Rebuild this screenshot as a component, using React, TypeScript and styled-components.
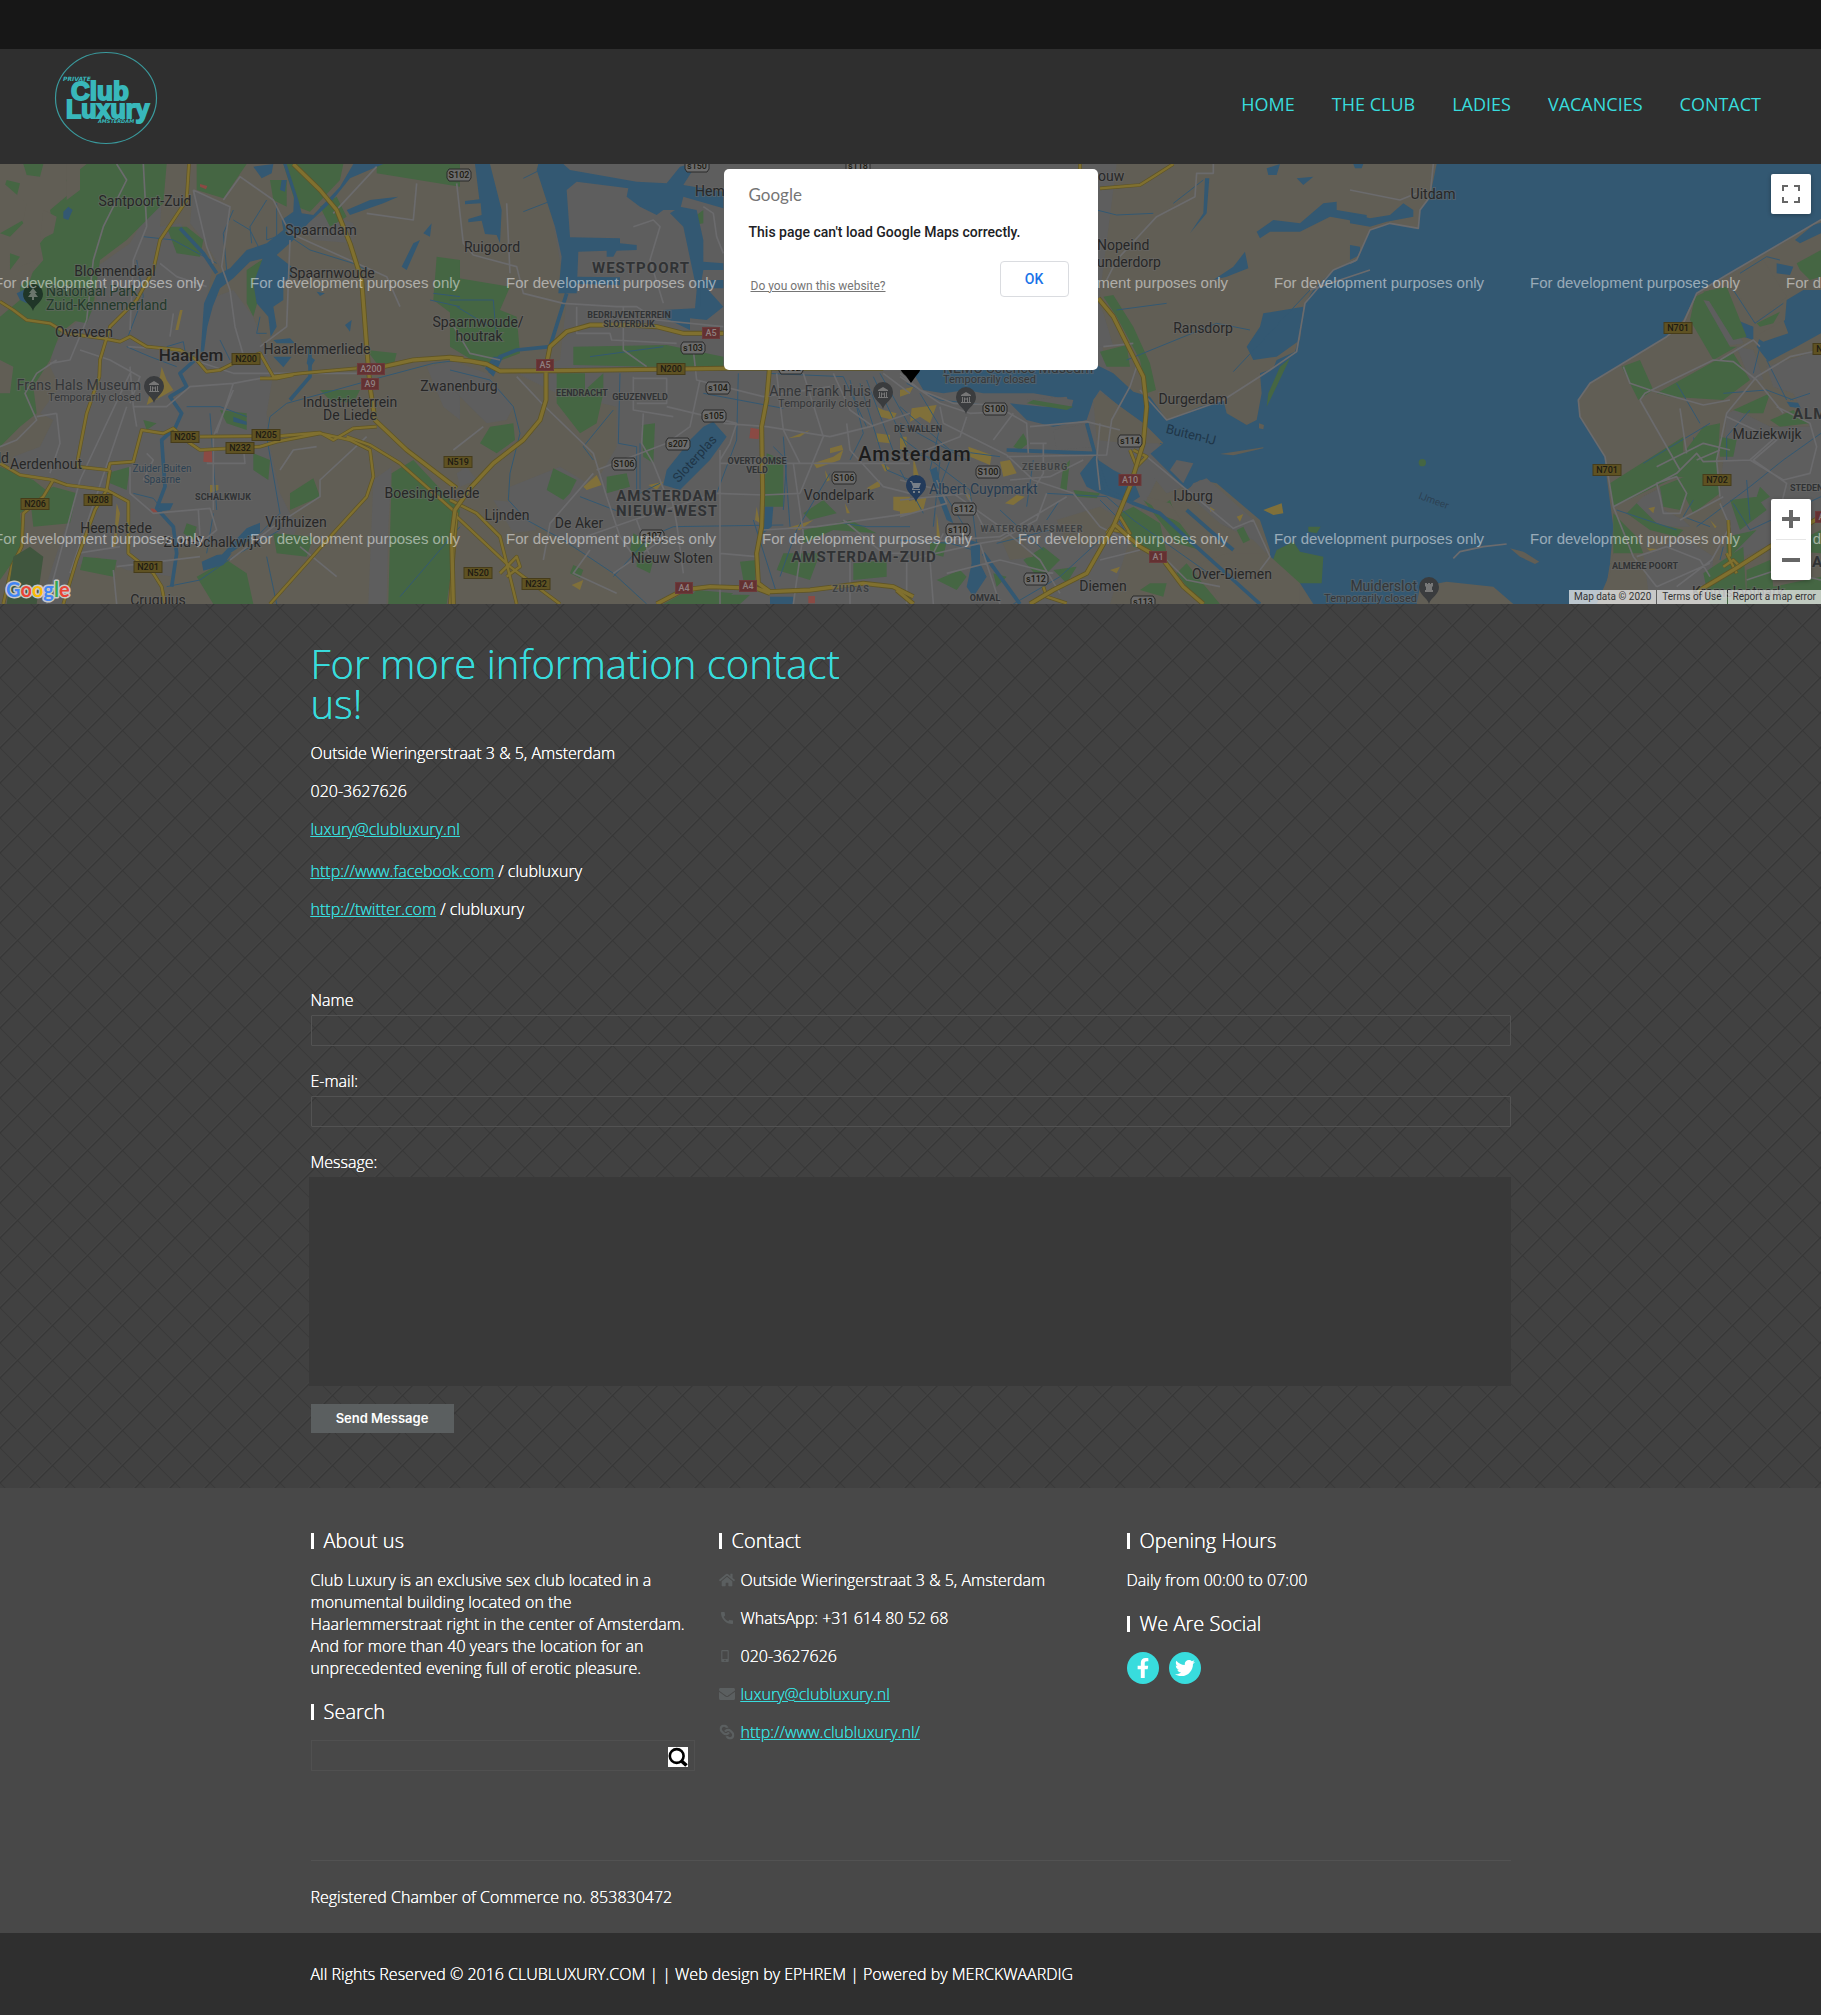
import React from "react";
import styled, { createGlobalStyle } from "styled-components";
import { FaEnvelope, FaFacebookF, FaHome, FaLink, FaMobileAlt, FaTwitter } from "react-icons/fa";
import { MdCall } from "react-icons/md";

const accent = "#38dcdd";

const diamondTile = `url("data:image/svg+xml,${encodeURIComponent(
  `<svg xmlns='http://www.w3.org/2000/svg' width='35' height='35' fill='none'><path d='M-2 -2L37 37' stroke='#393939' stroke-width='1.2'/><path d='M-2 35.500L35.500 -2' stroke='#464646'/><path d='M-2 37L37 -2M-2 2L2 -2M33 37L37 33' stroke='#373737' stroke-width='1.3'/></svg>`
)}")`;

const GlobalStyle = createGlobalStyle`
  * { box-sizing: border-box; }
  body {
    margin: 0;
    background: #414141;
    color: #fff;
    font: 300 16px/22px "Open Sans", "Noto Sans", sans-serif;
    text-shadow: 0 0 currentColor;
  }
  p, h1, h2, ul { margin: 0; padding: 0; font-weight: 300; }
  ul { list-style: none; }
`;

const TopBar = styled.div`
  height: 49px;
  background: #171717;
`;

const Header = styled.header`
  display: flex;
  justify-content: space-between;
  align-items: flex-start;
  height: 115px;
  padding: 0 60px 0 54px;
  background: #2f2f2f;
  text-shadow: none;
`;

const HomeLink = styled.a`
  display: block;
  height: 98px;
`;

const Nav = styled.nav`
  display: flex;
  gap: 37px;
  padding-top: 43px;
`;

const NavLink = styled.a`
  color: ${accent};
  font-size: 18px;
  font-weight: 400;
  line-height: 24px;
  text-decoration: none;
`;

const MapPanel = styled.section`
  position: relative;
  height: 440px;
  overflow: hidden;
  background: #615e55;
  font-family: Roboto, "Liberation Sans", sans-serif;
  text-shadow: none;
`;

const MapDrawing = styled.svg`
  display: block;
  width: 100%;
  height: 440px;
`;

const Dialog = styled.div`
  position: absolute;
  top: 5px;
  left: 50%;
  width: 374px;
  height: 201px;
  margin-left: -187px;
  padding: 15px 25px;
  border-radius: 5px;
  background: #fff;
  color: #202124;
`;

const DialogBrand = styled.div`
  color: #757575;
  font: 400 17px/22px Lato, sans-serif;
`;

const DialogTitle = styled.p`
  && { font-weight: 500; }
  margin-top: 16px;
  font-size: 14px;
  line-height: 20px;
`;

const DialogRow = styled.div`
  display: flex;
  justify-content: space-between;
  align-items: center;
  padding: 19px 4px 0 2px;
`;

const OwnerLink = styled.a`
  margin-top: 13px;
  color: #757575;
  font-size: 12px;
  font-weight: 400;
  line-height: 16px;
`;

const OkButton = styled.button`
  width: 69px;
  height: 36px;
  border: 1px solid #dadce0;
  border-radius: 4px;
  background: #fff;
  color: #1a73e8;
  font: 500 14px Roboto, sans-serif;
`;

const MapControls = styled.div`
  position: absolute;
  top: 10px;
  right: 10px;
  bottom: 24px;
  display: flex;
  flex-direction: column;
  justify-content: space-between;
`;

const ControlGroup = styled.div`
  display: flex;
  flex-direction: column;
  align-items: center;
  border-radius: 2px;
  background: #fff;
  box-shadow: 0 1px 4px rgba(0, 0, 0, 0.3);
`;

const ControlButton = styled.button`
  display: grid;
  place-items: center;
  width: 40px;
  height: 40px;
  padding: 0;
  border: 0;
  background: none;
`;

const ControlDivider = styled.div`
  width: 30px;
  height: 1px;
  background: #e6e6e6;
`;

const Attribution = styled.div`
  position: absolute;
  right: 0;
  bottom: 0;
  display: flex;
  gap: 1px;
`;

const Credit = styled.a`
  padding: 0 5px;
  background: rgba(245, 245, 245, 0.7);
  color: #333;
  font-size: 10px;
  font-weight: 400;
  line-height: 14px;
  text-decoration: none;
`;

const Main = styled.main`
  padding: 40px 20px 55px;
  background: #414141 ${diamondTile} 0 4px;
`;

const Container = styled.div`
  max-width: 1200px;
  margin: 0 auto;
`;

const Title = styled.h1`
  max-width: 588px;
  && { margin-bottom: 18px; }
  color: ${accent};
  font-size: 40px;
  line-height: 40px;
`;

const Details = styled.div`
  display: flex;
  flex-direction: column;
  gap: 16px;
`;

const Profiles = styled(Details)`
  margin-top: 4px;
`;

const TextLink = styled.a`
  color: ${accent};
`;

const Form = styled.form`
  display: flex;
  flex-direction: column;
  gap: 24px;
  margin-top: 69px;
`;

const Field = styled.div`
  display: flex;
  flex-direction: column;
  gap: 4px;
`;

const TextInput = styled.input`
  width: 100%;
  height: 31px;
  padding: 0 8px;
  border: 1px solid #525252;
  border-radius: 1px;
  background: transparent;
  color: #fff;
  font: inherit;
`;

const MessageBox = styled.textarea`
  display: block;
  height: 209px;
  margin: 0 0 0 -2px;
  padding: 8px;
  border: 0;
  background: #393939;
  color: #fff;
  font: inherit;
  resize: none;
`;

const SendButton = styled.button`
  width: 143px;
  height: 29px;
  margin-top: -6px;
  padding: 0 0 2px;
  border: 0;
  background: #5b5f60;
  color: #fff;
  font: 600 13px Inter, "Liberation Sans", sans-serif;
`;

const Footer = styled.footer`
  padding: 40px 20px 25px;
  background: #484848;
`;

const Columns = styled.div`
  display: grid;
  grid-template-columns: repeat(3, 1fr);
  gap: 24px;
  padding-bottom: 89px;
  border-bottom: 1px solid #525252;
`;

const Column = styled.div`
  display: flex;
  flex-direction: column;
  gap: 20px;
`;

const Widget = styled.section`
  display: flex;
  flex-direction: column;
  gap: 15px;
`;

const WidgetTitle = styled.h2`
  display: flex;
  align-items: center;
  gap: 10px;
  font-size: 20px;
  line-height: 26px;

  &::before {
    content: "";
    width: 3px;
    height: 16px;
    background: #fff;
  }
`;

const SearchForm = styled.form`
  display: flex;
  align-items: center;
  height: 31px;
  padding-right: 6px;
  border: 1px solid #505050;
`;

const SearchInput = styled.input`
  flex: 1;
  height: 29px;
  padding: 0 8px;
  border: 0;
  background: transparent;
  color: #fff;
  font: inherit;
`;

const SearchButton = styled.button`
  display: block;
  width: 20px;
  height: 20px;
  margin-top: 2px;
  padding: 0;
  border: 0;
  background: #fff;

  svg { display: block; }
`;

const ContactItem = styled.li`
  display: flex;
  align-items: center;
  gap: 6px;
`;

const ItemIcon = styled.span<{ $turned?: boolean }>`
  display: flex;
  width: 16px;
  color: #5b5f60;
  transform: ${(p) => (p.$turned ? "rotate(90deg)" : "none")};
`;

const ContactList = styled.ul`
  display: flex;
  flex-direction: column;
  gap: 16px;
`;

const Socials = styled.div`
  display: flex;
  gap: 10px;
`;

const SocialLink = styled.a`
  display: grid;
  place-items: center;
  width: 32px;
  height: 32px;
  border-radius: 50%;
  background: ${accent};
  color: #fff;
`;

const Registration = styled.p`
  && { margin-top: 25px; }
`;

const Legal = styled.div`
  padding: 30px 20px;
  background: #2f2f2f;
`;

function Logo() {
  return (
    <svg width="104" height="98" viewBox="54 49 104 98" role="img" aria-label="Private Club Luxury Amsterdam">
      <ellipse cx="106" cy="98" rx="50.5" ry="45.5" fill="none" stroke="#3a9a9d" strokeWidth="1.2" />
      <g fill="#38b8bb" stroke="#38b8bb" fontFamily="Liberation Sans, Arial, sans-serif" fontWeight="700">
        <text x="71" y="100" fontSize="26" strokeWidth="1.8">Club</text>
        <text x="66" y="118" fontSize="25" strokeWidth="1.8">Luxury</text>
        <g fontStyle="italic" stroke="none" fontFamily="DejaVu Sans, sans-serif">
          <text x="63" y="81" fontSize="6">PRIVATE</text>
          <text x="98" y="123" fontSize="5">AMSTERDAM</text>
        </g>
      </g>
    </svg>
  );
}

/* Map geometry is kept in a 3x grid, divided into sheets by their left edge. */
type Sheet = {
  left: number;
  urban?: string[];
  land?: string[];
  green?: string[];
  water?: string[];
  canals?: string[];
  rivers?: string[];
  streets?: string[];
  mains?: string[];
  highways?: string[];
  blocks?: string[];
  reds?: string[];
};

const sheets: Sheet[] = [
  {
    left: 0,
    green: [
      "0 470 60 420 60 380 130 300 120 250 160 200 150 150 210 100 200 60 260 12 500 12 490 130 440 180 380 240 300 300 280 440 180 520 150 600 100 680 110 760 60 800 0 860",
      "70 12 130 12 120 50 80 45", "20 60 60 70 50 110 10 90", "0 180 50 150 70 190 30 230 0 220", "30 280 60 290 30 330",
      "0 920 100 960 150 1000 60 1060 70 1160 0 1260", "90 1010 160 980 230 1000 210 1090 100 1100",
      "500 200 560 200 610 240 600 290 530 280", "590 12 740 12 670 115 590 90", "810 60 860 60 860 140 820 120", "850 12 1030 12 1020 60 930 155 890 140",
      "1130 12 1380 12 1380 80 1130 40", "740 330 800 290 780 400 760 470 740 430", "960 140 1010 110 1040 170 990 200",
      "1100 570 1190 580 1180 620 1130 610", "660 750 740 760 740 810 680 790", "760 880 810 900 805 960 760 930", "430 780 470 790 440 810",
      "870 1000 940 955 960 1010 870 1050", "1175 940 1240 900 1380 1050 1340 1332 1165 1332", "590 1250 680 1200 740 1240 760 1332 640 1332",
      "820 1120 940 1130 920 1190 830 1180", "560 1090 590 1100 580 1140 550 1120", "1310 290 1380 300 1380 480 1300 420", "320 940 390 920 380 990 330 970",
      "960 690 1080 690 1060 730 990 720", "250 1190 350 1200 340 1250 240 1230", "230 320 290 310 280 370 230 380", "210 440 280 440 260 490 210 480",
    ],
    land: [
      "0 60 80 130 70 180 0 220", "200 12 240 12 240 90 200 120", "130 150 170 170 160 220 120 240", "60 320 110 300 90 360 40 370", "0 600 40 620 30 700 0 700",
    ],
    urban: [
      "440 60 490 60 480 200 540 190 640 310 620 420 700 390 760 470 790 560 820 640 800 760 810 860 840 1000 880 1080 840 1130 760 1140 540 1160 520 1250 380 1230 290 1190 230 1220 200 1332 120 1332 230 1000 150 960 60 950 40 890 120 860 160 780 120 760 180 680 150 620 160 560 200 510 290 440 290 320 390 250 430 180",
      "580 90 690 140 660 320 610 240 570 190", "900 190 980 160 1060 190 1060 250 940 240", "1280 620 1380 600 1380 780 1330 740", "1120 960 1175 920 1165 1100 1160 1332 1105 1332", "850 1060 900 1080 880 1130 840 1110",
    ],
    water: [
      "1060 12 1150 12 1050 55 990 130 925 190 880 240 830 285 750 305 700 355 660 385 638 440 622 500 612 575 602 575 612 430 650 345 690 325 740 270 800 250 850 210 845 180 880 155 882 110 850 12 860 12 895 120 905 160 940 165 1020 80",
      "790 290 830 285 875 320 875 350 850 365 850 420 820 440 830 500 812 530 805 470 770 430 760 370 775 330",
      "1040 150 1110 120 1195 110 1150 130 1050 165", "1270 220 1295 190 1290 230", "1240 250 1260 240 1220 330 1205 320",
      "605 1205 650 1185 695 1180 670 1215 610 1232", "740 1105 780 1088 780 1120 690 1180 650 1200", "760 20 820 12 815 40 785 55", "190 155 205 140 218 150 205 180 190 175",
      "50 400 90 380 80 430 60 420", "820 590 875 590 850 622", "950 395 975 400 960 408", "1035 495 1055 480 1050 515", "845 60 860 60 855 95 840 90", "820 540 870 535 885 550 830 550",
      "700 770 740 785 740 795 700 785", "480 1030 520 1030 510 1050 475 1055", "925 585 945 600 930 625 920 610",
    ],
    rivers: ["585 600 540 640 560 680 510 710 545 760 525 805 485 840 495 980 470 1045 520 1100 530 1180 515 1280", "930 560 930 650 870 720", "650 340 610 280 540 205"],
    canals: [
      "1380 600 1300 610 1150 650 970 700 860 730 810 770 800 830 840 1060 780 1120", "500 1280 600 1260 700 1190 840 1110", "380 560 450 590 530 620", "700 150 670 220 680 330", "830 130 830 230 800 240 800 200",
      "700 180 750 210 780 270", "800 120 750 200 755 250", "560 740 660 740 740 770", "630 760 635 830 650 1050", "1380 1100 1200 1310", "410 300 430 410 380 540", "620 1180 640 1060", "780 470 770 520 800 520", "870 230 930 270 1060 310 1100 330",
      "1300 400 1380 410", "1290 420 1380 440", "500 560 550 545 560 600", "660 540 690 600", "400 1000 460 1015 480 1040", "800 1190 830 1332", "430 230 520 240 650 310",
    ],
    streets: [
      "430 12 440 200 400 300 390 510", "350 12 380 60 310 200 280 300 260 480 210 600 150 610", "580 90 690 140 665 320 690 390 705 500 730 585", "580 90 620 260 640 310", "480 310 530 350 620 380", "510 530 520 460",
      "240 570 330 600 420 650 390 730", "400 740 500 740 570 680 700 670 810 650", "700 670 650 820", "390 920 390 1000 460 1060 630 1045 650 1110 600 1150", "595 1050 600 1130 620 1140", "170 760 180 850 150 940",
      "0 860 50 840 110 780 75 700 110 640 170 600", "690 1200 820 1100 960 1010 960 960 1100 830", "670 120 720 50 820 120 870 220 1070 310", "210 1240 380 740", "870 240 860 500 780 560", "580 600 700 640 1070 640",
      "110 770 170 760", "385 560 520 570", "440 880 460 900 430 960", "700 690 640 830 640 1050", "730 860 735 910 620 910", "1070 310 1160 350 1200 440", "1250 70 1240 180 1100 160", "340 1230 350 1332", "230 1180 360 1160",
      "350 1220 600 1190", "390 620 400 740 410 800", "140 1332 240 960 390 640", "840 930 880 870 950 860", "1130 20 1000 160", "900 1160 1010 1250",
    ],
    mains: [
      "567 12 560 120 480 240 460 330 410 420 330 500 300 600 298 650 260 760 235 890 230 920", "0 425 40 450 80 480 150 490 200 520 310 535 360 545 390 530 440 560 540 570 590 600 620 635 660 630 700 610 780 580 820 650 900 640 1070 625",
      "230 920 325 930 330 910 400 905 425 810 490 820 520 805 570 850 600 870 780 860 830 845 960 820 1050 840 1110 870 1120 950 1100 1010 1000 1120 810 1332",
      "600 830 840 828 960 818 1000 840 1060 805 1130 800", "0 910 60 945 160 960 200 975 320 990 385 1025 385 1180 460 1240 485 1280 495 1332", "330 930 320 990 285 1050 230 1200 190 1332",
      "160 960 130 1010 70 1060 65 1160 35 1220 10 1332", "1040 830 1110 855 1200 910 1370 1060 1350 1332", "780 655 830 655 880 645",
    ],
    highways: ["1070 625 1150 620 1240 600 1350 592 1390 597", "880 12 960 90 1010 150 1050 250 1085 360 1100 560 1110 680 1125 780 1220 870 1370 985"],
    blocks: ["540 450 548 450 535 510 526 510", "485 620 480 650 465 680 475 720 450 700 440 735 520 690 500 660", "350 1030 360 1060 345 1165 340 1160", "630 975 655 975 655 990 630 1000"],
    reds: ["600 72 622 78 618 88 600 80", "612 868 638 868 638 908 610 905", "452 1045 478 1050 472 1062 455 1058"],
  },
  {
    left: 1350,
    urban: [
      "280 12 2000 12 1950 400 1960 600 2100 800 2150 900 2050 1100 1980 1332 590 1332 490 1240 340 1140 230 1080 180 1020 180 980 330 920 430 980 500 860 500 740 320 700 200 640 330 600 350 420",
      "0 600 110 640 190 740 170 780 110 790 0 680", "130 1020 220 1030 260 1110 190 1120", "20 940 50 920 80 960 30 980",
    ],
    green: [
      "0 350 180 380 150 450 200 470 210 580 100 620 0 560", "370 560 650 555 820 590 820 620 600 620 370 615", "320 640 405 640 405 690 460 640 460 700 440 790 390 820 320 730",
      "120 800 190 790 195 840 140 880 90 850", "310 925 380 960 360 1000 340 1020 290 990", "575 795 615 790 610 910 580 890", "470 950 530 940 540 980 470 1000", "950 880 1000 900 1000 1040 940 1040",
      "1060 1110 1200 1080 1280 1120 1150 1110 1060 1150", "870 1205 920 1200 915 1260 880 1260", "1000 1180 1110 1180 1080 1260 980 1230", "640 1332 700 1300 900 1305 870 1332", "550 1120 600 1150 570 1200 540 1170",
      "370 1215 400 1230 390 1255 360 1240", "1210 1210 1310 1200 1310 1250 1210 1260", "720 180 760 150 760 190 730 195", "560 1200 610 1200 600 1240 560 1220", "1120 1020 1160 1060 1080 1080 1060 1060", "740 1290 850 1300 800 1332 700 1332", "0 1060 20 1080 0 1170",
    ],
    water: [
      "75 12 120 12 155 150 150 250 140 225 105 222 95 182 55 187 55 177 95 165 92 130 45 133 45 123 88 118",
      "265 12 340 12 360 30 560 65 650 70 690 20 720 12 740 12 700 75 820 95 820 145 700 110 690 150 640 150 620 165 570 140 530 110 535 85 380 65 350 90 360 232 510 235 510 250 560 255 560 270 500 272 490 290 470 290 470 272 385 275 382 350 510 352 510 375 382 372 380 400 325 400 335 290 315 200 260 30",
      "690 140 740 150 760 240 760 305 820 310 820 330 760 330 755 360 820 360 820 385 770 385 820 440 770 480 720 475 720 510 640 472 640 450 735 445 740 390 700 200 660 160",
      "760 800 790 785 830 830 780 900 720 960 690 990 640 975 650 930 690 880 720 840", "130 590 160 590 130 650 105 625", "945 1040 970 1040 965 1100 940 1120", "960 1310 1030 1310 1030 1332 960 1332",
    ],
    rivers: ["350 400 300 560 200 570 150 590 120 640"],
    canals: [
      "0 630 120 660 190 740 210 820 180 940 175 1020 230 1080 340 1140 490 1240 590 1332", "490 1250 600 1130 670 1100 1000 1095", "760 700 1000 745", "865 640 860 840 800 1000", "510 640 505 850 560 860 560 990", "570 850 570 1000 630 970",
      "490 750 400 860 430 900", "220 55 290 20", "220 155 310 120", "950 640 1180 650 1250 800", "970 860 1010 900 1000 1050", "1230 670 1310 930 1380 960", "1250 660 1340 900", "1270 650 1370 860", "1290 640 1380 800",
      "1200 660 1240 820 1200 900", "990 1250 1040 1110 1140 940", "1180 1090 1250 1100 1380 1100", "750 390 750 440", "390 1010 520 1060", "0 420 130 420 140 540", "20 440 120 500",
      "1000 830 1020 1100", "910 1080 980 1300", "420 590 640 560",
    ],
    streets: [
      "20 70 40 250 70 285 200 320 220 400 340 430 500 440 560 440 620 480 820 500", "380 440 380 520 480 520 485 540 680 550", "520 440 520 570 590 620", "200 650 280 735 430 880 470 1010 510 1130 560 1200",
      "750 660 720 800 650 850 440 930", "550 650 550 750 670 770", "550 655 650 655 650 730 560 730", "730 570 740 660 940 710 1140 680", "820 790 950 800 1140 830 1260 800 1380 760", "580 760 575 850 610 910 650 1010",
      "280 1200 300 1090 430 940", "350 1150 550 1080 800 1000 940 1005 1050 1000", "810 870 810 1332", "490 1240 620 1150", "550 200 610 180 630 200 600 300 640 430", "1050 910 1000 810 980 640", "810 910 1380 910", "650 740 860 790 840 850 810 900",
      "1030 910 1060 1120 1030 1332", "1060 640 1120 830 1050 1000", "940 1110 1100 1100 1380 1060", "1150 640 1200 750 1270 800", "1190 790 1200 870 1300 980 1380 1000", "810 1180 920 1190", "0 480 60 580 150 600", "100 800 10 870", "180 340 170 130", "760 140 790 160 800 230 820 280", "420 1170 370 1240 500 1300",
      "660 990 680 1090 700 1240", "560 1080 600 1190", "1180 1080 1300 1180 1380 1180", "1200 1200 1200 1332", "1300 640 1380 700",
    ],
    mains: ["0 1020 80 1060 150 1130 180 1250 200 1332", "20 1070 180 1220 330 1332", "150 1240 200 1190 210 1220 170 1250"],
    highways: [
      "0 597 60 603 110 612 150 633 320 632 620 628 820 625 1300 625", "820 520 700 520 620 500 540 495 420 495 350 515 300 560 288 620 288 720 270 780 220 840 130 910 60 985 15 1050 5 1130 10 1332",
      "958 630 950 720 935 800 938 1000 935 1100 920 1180 925 1270 960 1295 1080 1290 1240 1270 1330 1280 1390 1310", "620 1332 700 1290 780 1280 920 1285 960 1300",
    ],
    blocks: ["400 980 440 945 455 975 410 990", "1090 910 1150 890 1180 870 1170 900 1100 925", "1140 865 1175 855 1180 870 1140 880", "1250 985 1290 960 1290 980 1260 990", "1280 740 1300 750 1340 760 1330 780 1290 770", "1280 820 1320 825 1320 850 1280 845", "1290 905 1320 925 1305 935", "1185 1030 1200 1060 1190 1060", "1010 1105 1090 1080 1050 1110", "1330 1010 1380 1010 1370 1060 1330 1050", "920 1040 930 1090 915 1080", "1015 835 1080 810 1050 830", "365 1275 400 1260 390 1290", "1125 930 1140 960 1130 965", "595 975 640 965 620 990"],
    reds: ["902 803 928 808 926 838 898 835", "1075 1308 1095 1308 1095 1330 1075 1330"],
  },
  {
    left: 2700,
    water: [
      "1610 12 1590 110 1560 150 1555 205 1470 190 1410 210 1370 300 1300 330 1240 390 1215 430 1200 520 1185 575 1130 600 1120 625 1080 640 1085 700 1070 780 1040 795 980 760 970 720 900 740 830 770 800 780 750 710 700 695 640 640 560 600 400 620 60 625 40 640 70 690 130 700 200 690 250 700 400 700 520 720 515 740 430 740 330 730 380 780 460 800 560 780 580 720 600 690 660 740 730 790 790 850 740 890 860 990 900 960 950 970 1080 1080 1110 1170 1110 1220 1200 1225 1200 1270 1240 1332 2110 1332 2130 1210 2140 1100 2120 950 2115 890 2040 770 2035 720 2070 670 2300 530 2350 480 2390 400 2763 180 2763 12",
      "1090 460 1210 440 1200 540 1130 590 1060 600 1040 560 1080 500", "1070 215 1120 180 1200 190 1270 130 1310 125 1310 150 1400 165 1400 190 1290 170 1200 215 1110 215 1080 235",
      "940 360 1000 320 1035 275 1045 325 980 350", "1100 25 1140 12 1130 45 1105 45", "1190 55 1240 50 1210 75", "540 940 580 890 640 930 700 960 720 1010 690 1030 600 1000 560 980", "915 55 928 55 920 160 870 220 910 160",
      "210 1140 240 1150 240 1210 260 1250 220 1310 200 1280 215 1210", "90 930 110 920 130 1010 160 1090 140 1080 110 1000",
    ],
    urban: ["750 880 850 980 800 1000 720 900", "830 900 880 910 850 970 810 930", "880 970 920 955 1060 1080 1100 1180 1060 1140 960 1090 860 1000", "460 810 570 790 580 860 470 870", "380 720 500 710 510 735 420 735", "590 420 610 460 640 560 590 560"],
    land: ["580 720 600 695 730 790 790 850 680 850 590 840", "980 1180 1100 1180 1200 1270 1200 1332 960 1332 900 1210", "1550 1332 1560 1280 1640 1265 1780 1280 1840 1332", "1830 1165 1870 1175 1918 1205 1905 1212 1860 1190", "960 882 1090 862 1090 865 1000 886", "1077 790 1092 795 1090 808 1077 805", "470 1080 600 1040 650 1070 600 1160 500 1150", "300 1130 360 1130 400 1190 330 1200", "740 1010 810 1030 850 1090 770 1060"],
    green: [
      "610 410 640 405 700 500 750 610 768 690 740 700 720 600 650 470", "600 575 680 555 690 620 620 620", "660 1060 700 1040 780 1090 800 1180 700 1160", "370 1200 430 1160 480 1200 420 1260", "1130 1170 1180 1145 1200 1175 1270 1190 1265 1270 1190 1270 1115 1210",
      "860 1210 900 1260 960 1332 900 1332 830 1240", "1225 1100 1262 1100 1250 1120 1225 1115", "1140 620 1170 595 1120 700 1100 740 1105 700", "340 860 370 820 385 850 360 870", "520 990 600 1000 590 1015 530 1010", "90 1150 140 1145 130 1190 90 1180", "750 1270 800 1270 790 1310 720 1290",
      "400 720 520 740 500 750 380 730", "730 1020 840 1090 900 1170 830 1150", "110 1260 180 1230 200 1250 170 1290", "460 1230 530 1220 500 1270", "780 1040 810 1020 820 1050", "280 1240 320 1250 290 1280", "490 920 510 900 500 990 480 990", "1010 1110 1030 1100 1050 1140 1030 1150",
    ],
    rivers: ["560 790 590 900 620 990 700 1030 780 1060 900 1170 1000 1260 1080 1332", "320 870 580 880", "250 1180 360 1332", "860 1050 940 1120 1000 1170"],
    canals: [
      "0 740 150 870 300 890", "0 790 200 900", "0 830 210 990 230 1150", "0 870 120 900 100 1100", "60 700 120 800 90 930", "440 1000 620 1010 700 1080 940 1250", "650 450 800 430", "680 600 950 490 1050 510", "1230 390 1000 635", "590 150 650 165 760 160",
      "820 130 910 60", "600 1020 650 1070 690 1140", "780 850 870 880 940 885", "0 1140 150 1150 220 1170", "20 670 120 720 300 740", "290 1150 450 1110", "340 1332 480 1250 600 1140", "300 1050 430 1170", "0 930 70 1060", "150 900 120 980 200 1110", "400 900 380 1040", "480 1020 440 1080",
    ],
    streets: [
      "0 650 120 730 210 760 320 755 380 790 385 880", "0 640 60 690 160 730 290 735", "390 800 560 785 660 810", "320 890 620 885 635 780 690 680 710 620", "120 740 130 790 320 885 400 960 520 1000 600 1100", "20 1332 20 1200 240 1150 300 1332", "440 1000 410 1080 300 1140 240 1150",
      "740 890 1000 1105 1060 1080 1110 1190 1080 1230", "970 720 1110 630 1190 575 1215 430 1300 330 1370 300", "970 720 800 780 720 690", "940 12 940 40 890 40 885 110 770 170 650 300 620 360", "0 1070 140 1030 110 960", "200 770 180 830 0 900", "330 960 450 950 550 900",
      "0 960 160 1000 300 1100 420 1200 480 1300", "0 1150 300 1130 500 1010", "600 1100 800 1200 860 1260 960 1280", "100 1332 90 1200 130 1120", "430 850 430 940 400 990", "140 1240 300 1200 460 1240", "600 1200 720 1170", "610 560 700 550", "280 840 340 760", "390 850 440 850", "1230 390 1410 330", "260 1120 200 1000 0 1020", "600 790 590 900 600 990",
    ],
    mains: ["600 85 720 75 760 50 820 12", "540 12 540 50", "700 870 740 890 710 920 690 870", "620 1120 660 1070 690 1120 640 1110", "430 1280 440 1310 500 1330"],
    highways: ["595 415 640 470 690 570 730 650 740 740 730 850 690 980 640 1100 560 1240 460 1290 390 1332", "640 1090 720 1160 790 1200 850 1280 910 1332", "-10 1290 40 1332"],
    blocks: ["35 745 110 735 90 790 60 770 30 785", "0 690 40 680 30 700 0 710", "205 860 275 885 270 915 210 890", "300 905 330 900 350 940 310 950", "0 830 20 830 20 870 0 870", "0 1030 80 1010 70 1050 0 1070", "315 1030 350 1005 375 1010 340 1035", "1090 1050 1145 1030 1150 1060 1120 1065", "1010 1070 1030 1062 1020 1085", "930 1040 945 1050 930 1055", "110 1060 120 1130 110 1130", "190 990 215 1010 205 1020", "630 1230 660 1220 650 1240", "40 890 60 960 40 950"],
  },
  {
    left: 4050,
    water: [
      "10 12 40 12 35 25 15 25", "0 160 60 175 120 165 160 130 190 150 190 170 110 185 60 200 0 190", "0 255 30 260 30 285 0 300", "1413 390 1360 390 1310 420 1305 480 1230 530 1220 560 1255 605 1340 560 1413 520", "1335 240 1390 195 1413 188 1413 220 1350 250", "1160 480 1210 500 1210 540 1180 530",
      "1280 310 1330 320 1320 345 1280 340", "1030 830 1045 850 1040 880 1030 860", "1310 725 1360 730 1413 740 1413 755 1320 740",
    ],
    land: ["1165 340 1240 300 1310 410 1215 490 1170 410", "1215 530 1300 480 1315 520 1240 545", "790 1180 780 1240 740 1332 900 1332 880 1180"],
    green: [
      "1035 410 1080 390 1110 430 1060 420 1140 560 1160 560 1090 600 1020 480", "1060 395 1130 380 1170 480 1190 530 1150 540", "815 620 870 600 910 690 865 720", "780 970 1000 830 1000 880 1060 800 1110 790 1100 960 980 950 790 1040", "920 700 1090 605 1150 580 1200 660 1120 720 960 710",
      "1340 310 1413 270 1413 350 1380 360 1350 330", "1150 750 1260 700 1240 760 1180 760", "830 1060 860 1030 920 1090 1000 1110 980 1130 900 1110", "930 980 980 960 1010 1000 990 1050 940 1040", "790 1060 860 1130 880 1180 790 1210", "1110 830 1160 840 1150 890 1110 890", "1140 1020 1220 1010 1250 1050 1170 1110", "980 960 1100 910 1110 1000 1030 1060",
      "1060 1240 1180 1160 1190 1332 1080 1332", "1190 1230 1260 1200 1270 1280 1413 1250 1413 1332 1190 1332", "1290 1170 1413 1110 1413 1180", "1260 780 1330 750 1380 790 1290 800", "1220 490 1290 455 1270 490 1230 500", "1130 1130 1220 1110 1130 1200", "1230 980 1260 1010 1210 1040",
    ],
    urban: ["1130 760 1160 750 1260 800 1380 800 1330 700 1270 680 1250 620 1413 570 1413 900 1300 960 1120 900", "1120 900 1300 960 1413 900 1413 1070 1270 1150 1160 1200 1110 1010", "1060 410 1110 400 1180 550 1100 560", "830 1060 880 1010 940 980 940 1050 1000 1080 1020 1100 930 1100 900 1100", "870 1190 1000 1130 1090 1190 1080 1280 920 1332 880 1280", "1160 560 1210 570 1240 660 1200 660"],
    rivers: [],
    canals: [
      "980 670 1050 790", "1150 390 1215 490 1300 430", "1170 340 1250 290 1290 300", "800 1050 920 1090 980 1110", "880 910 1080 790", "1190 960 1200 1080", "1120 700 1250 690 1330 720", "1413 820 1300 900 1200 980 1040 1100", "1413 1010 1200 1110 1150 1030", "1250 600 1310 720", "1030 1020 1000 1070 1080 1100", "1200 750 1130 830 1130 900", "1120 1160 1110 1200", "730 630 740 650", "840 570 850 590", "1380 700 1320 720", "780 1210 740 1280", "1230 560 1210 640",
    ],
    streets: [
      "1000 490 1040 400 1130 345 1420 175", "790 1040 775 950 765 890 690 770 685 720 720 670 950 530 1000 490", "790 1040 980 940 1040 880 1060 905 1200 900 1300 960 1380 940 1400 860 1380 790 1280 740", "870 720 885 700 1090 600 1150 605 1220 660 1300 760", "870 720 990 930", "1110 1010 1100 900 1130 760 1220 650 1320 590 1413 570",
      "790 1040 850 1190 920 1280", "930 1010 920 970 980 950 1010 1000 990 1060 940 1060 930 1010", "1130 770 1280 840 1210 900 1310 970 1290 1050", "820 620 840 670 900 690 1060 735 1140 720", "990 745 1010 880", "1110 1030 1140 1100 1085 1200 980 1280", "860 1190 950 1160 1050 1200 1080 1250", "1110 870 1040 900", "1190 1260 1280 1230 1413 1260",
      "0 90 150 120 200 100", "250 12 240 110 210 150 205 205 120 190 60 210 20 300 0 310", "1290 820 1200 900", "310 1195 330 1175 400 1160", "400 1160 470 1152", "920 920 1060 850 1140 870", "1110 600 1210 540 1230 560", "990 1080 1120 1010", "920 1280 1080 1210",
    ],
    mains: ["1135 1080 1140 1190", "1120 1220 1150 1200 1170 1220 1130 1240", "1130 1180 1160 1240"],
    highways: ["1040 1296 1150 1230 1260 1160 1420 1066"],
    blocks: ["895 1045 915 1040 910 1060", "890 1165 935 1168 900 1172", "1080 1080 1100 1100 1095 1105"],
  },
];

const lines = (d: string[] | undefined) => (d ?? []).map((p) => "M" + p).join("");
const areas = (d: string[] | undefined) => (d ?? []).map((p) => "M" + p + "Z").join("");

const layers: { key: keyof Sheet; fill?: string; stroke?: string; width?: number }[] = [
  { key: "urban", fill: "#5e5e5e" },
  { key: "green", fill: "#456643" },
  { key: "land", fill: "#615e55" },
  { key: "blocks", fill: "#80703a" },
  { key: "reds", fill: "#8a4a44" },
  { key: "canals", stroke: "#335872", width: 3 },
  { key: "rivers", stroke: "#335872", width: 11 },
  { key: "streets", stroke: "#6b6b6d", width: 5 },
  { key: "mains", stroke: "#5f5526", width: 11 },
  { key: "mains", stroke: "#80702f", width: 7 },
  { key: "highways", stroke: "#5f5526", width: 15 },
  { key: "highways", stroke: "#80702f", width: 10 },
];

type Kind = "town" | "city" | "capital" | "district" | "area" | "quarter" | "poi" | "note" | "water" | "lake" | "market" | "park";
type Anchor = "start" | "middle" | "end";

const kinds: Record<Kind, { size: number; weight: number; color: string; spacing?: number }> = {
  town: { size: 14, weight: 400, color: "#272727" },
  city: { size: 17, weight: 500, color: "#222" },
  capital: { size: 20, weight: 500, color: "#1c1c1c", spacing: 1 },
  district: { size: 15, weight: 700, color: "#303234", spacing: 1 },
  area: { size: 9, weight: 700, color: "#303234" },
  quarter: { size: 9, weight: 700, color: "#3c3f41", spacing: 1 },
  poi: { size: 14, weight: 400, color: "#343638" },
  note: { size: 11, weight: 400, color: "#343638" },
  water: { size: 10, weight: 400, color: "#2c4152" },
  lake: { size: 13, weight: 400, color: "#1f3547" },
  market: { size: 14, weight: 400, color: "#263c52" },
  park: { size: 14, weight: 400, color: "#233a2b" },
};

const labels: [Kind, string, number, number, Anchor?, number?][] = [
  ["town", "Santpoort-Zuid", 145, 42], ["town", "Spaarndam", 321, 71], ["town", "Spaarnwoude", 332, 114], ["town", "Bloemendaal", 115, 112],
  ["park", "Nationaal Park", 46, 132, "start"], ["park", "Zuid-Kennemerland", 46, 146, "start"], ["town", "Overveen", 84, 173], ["city", "Haarlem", 191, 197],
  ["town", "Haarlemmerliede", 317, 190], ["poi", "Frans Hals Museum", 141, 226, "end"], ["note", "Temporarily closed", 141, 237, "end"], ["town", "Industrieterrein", 350, 243],
  ["town", "De Liede", 350, 256], ["town", "Boesingheliede", 432, 334], ["town", "Aerdenhout", 46, 305], ["town", "ld", 9, 299, "end"], ["water", "Zuider Buiten", 162, 308],
  ["water", "Spaarne", 162, 319], ["area", "SCHALKWIJK", 223, 336], ["town", "Heemstede", 116, 369], ["town", "Vijfhuizen", 296, 363], ["town", "Zuid-Schalkwijk", 212, 383],
  ["town", "Cruquius", 158, 441], ["town", "Zwanenburg", 459, 227], ["town", "Spaarnwoude/", 478, 163], ["town", "houtrak", 479, 177], ["town", "Ruigoord", 492, 88],
  ["district", "WESTPOORT", 641, 109], ["area", "BEDRIJVENTERREIN", 629, 154], ["area", "SLOTERDIJK", 629, 163], ["area", "EENDRACHT", 582, 232], ["area", "GEUZENVELD", 640, 236],
  ["town", "Lijnden", 507, 356], ["town", "De Aker", 579, 364], ["district", "AMSTERDAM", 667, 337], ["district", "NIEUW-WEST", 667, 352], ["town", "Nieuw Sloten", 672, 399],
  ["lake", "Sloterplas", 695, 299, "middle", -48], ["area", "OVERTOOMSE", 757, 300], ["area", "VELD", 757, 309], ["town", "Vondelpark", 839, 336], ["poi", "Anne Frank Huis", 871, 232, "end"],
  ["note", "Temporarily closed", 871, 243, "end"], ["town", "Hem", 695, 32, "start"], ["capital", "Amsterdam", 915, 297], ["area", "DE WALLEN", 894, 268, "start"], ["district", "AMSTERDAM-ZUID", 864, 398],
  ["quarter", "ZUIDAS", 851, 428], ["town", "ouw", 1098, 17, "start"], ["town", "Nopeind", 1097, 86, "start"], ["town", "underdorp", 1097, 103, "start"], ["town", "Ransdorp", 1203, 169],
  ["town", "Durgerdam", 1193, 240], ["poi", "NEMO Science Museum", 943, 209, "start"], ["note", "Temporarily closed", 943, 219, "start"], ["quarter", "ZEEBURG", 1045, 306], ["market", "Albert Cuypmarkt", 929, 330, "start"],
  ["quarter", "WATERGRAAFSMEER", 1032, 368], ["lake", "Buiten-IJ", 1191, 275, "middle", 14], ["town", "IJburg", 1193, 337], ["town", "Diemen", 1103, 427], ["area", "OMVAL", 985, 437],
  ["town", "Over-Diemen", 1232, 415], ["town", "Uitdam", 1433, 35], ["water", "IJmeer", 1434, 340, "middle", 20], ["poi", "Muiderslot", 1417, 427, "end"], ["note", "Temporarily closed", 1417, 438, "end"],
  ["area", "ALMERE POORT", 1645, 405], ["town", "Muziekwijk", 1767, 275], ["district", "ALMERE", 1793, 255, "start"], ["area", "STEDENWIJK", 1790, 327, "start"], ["town", "Kromslootpark", 1738, 433], ["district", "AL", 1812, 403, "start"],
];

const routes: [string, number, number][] = [
  ["N200", 246, 195], ["N205", 185, 273], ["N205", 266, 271], ["N232", 240, 284], ["N208", 98, 336], ["N206", 35, 340], ["N201", 148, 403], ["A200", 371, 205], ["A9", 370, 220],
  ["N519", 458, 298], ["N520", 478, 409], ["N232", 536, 420], ["N200", 671, 205], ["A5", 711, 169], ["A5", 545, 201], ["A4", 684, 424], ["A4", 748, 422], ["A10", 1130, 316],
  ["A1", 1158, 393], ["N701", 1678, 164], ["N701", 1607, 306], ["N702", 1717, 316], ["N702", 1827, 185], ["A6", 1824, 353],
  ["S102", 459, 11], ["s150", 697, 2], ["s118", 858, 2], ["s103", 693, 184], ["s104", 718, 224], ["s105", 714, 252], ["s207", 678, 280], ["S106", 624, 300], ["s107", 652, 372],
  ["s102", 791, 204], ["S106", 844, 314], ["S100", 995, 245], ["S100", 988, 308], ["s114", 1130, 277], ["s112", 964, 345], ["s110", 958, 366], ["s112", 1036, 415], ["s113", 1143, 438],
];

function Route({ name, x, y }: { name: string; x: number; y: number }) {
  const letter = name[0];
  const city = letter.toLowerCase() === "s";
  const w = name.length * 5 + (letter === "A" ? 7 : 8);
  const ink = letter === "A" ? "#8f8080" : "#1d1b12";
  return (
    <g>
      {city ? (
        <path d={`M${x - 10} ${y - 6}h20l2 3v6l-2 3h-20l-2-3v-6z`} fill="#6c6c6c" stroke="#2a2a2a" />
      ) : (
        <rect x={x - w / 2} y={y - 5.5} width={w} height="11" fill={letter === "A" ? "#643132" : "#5f5222"} stroke={letter === "A" ? "#6b3a3b" : "#463c1a"} />
      )}
      <text x={x} y={y + 3} fontSize="9" fontWeight="500" fill={ink} textAnchor="middle">{name}</text>
    </g>
  );
}

const pinPath = "M0 16C-2 9-10 7-10-1a10 10 0 0 1 20 0C10 7 2 9 0 16z";

function Pin({ x, y, color, children }: { x: number; y: number; color: string; children: React.ReactNode }) {
  return (
    <g transform={`translate(${x} ${y})`}>
      <path d={pinPath} fill={color} />
      {children}
    </g>
  );
}

const museum = <path d="M-5-3L0-6L5-3v1H-5zM-4-1h1v5h-1zM3-1h1v5h-1zM-5 4H5v1H-5zM-2 4v-5l2 2 2-2v5H1V1L0 2-1 1v3z" fill="#777" />;

function CityMap() {
  const watermarkX = [-6, 250, 506, 762, 1018, 1274, 1530, 1786];
  return (
    <MapDrawing viewBox="0 0 1821 440" preserveAspectRatio="xMidYMid slice" role="img" aria-label="Map of Amsterdam">
      <rect width="1821" height="440" fill="#615e55" />
      <g fill="none" strokeLinejoin="round">
        <g transform="translate(0 -4) scale(0.33333)">
          {sheets.map((s) => <path key={s.left} transform={`translate(${s.left} 0)`} d={areas(s.urban)} fill="#5e5e5e" />)}
          {sheets.slice(0, 2).map((s) => <path key={s.left} transform={`translate(${s.left} 0)`} d={areas(s.green)} fill="#456643" />)}
          {sheets.map((s) => <path key={s.left} transform={`translate(${s.left} 0)`} d={areas(s.water)} fill="#335872" />)}
          {layers.map((l, i) => (
            <g key={i}>
              {sheets.map((s) => {
                const d = s[l.key] as string[] | undefined;
                if (s.left < 2000 && (l.key === "urban" || l.key === "green")) return null;
                return (
                  <path key={s.left} transform={`translate(${s.left} 0)`} d={l.fill ? areas(d) : lines(d)} fill={l.fill ?? "none"} stroke={l.stroke} strokeWidth={l.width} />
                );
              })}
            </g>
          ))}
          <circle cx="4267" cy="908" r="11" fill="#456643" />
          <path d="M40 1190L90 1160 130 1190 110 1332H20Z" fill="#40563e" />
        </g>
      </g>
      <g fontFamily="Roboto, Liberation Sans, sans-serif">
        {routes.map(([name, x, y], i) => <Route key={i} name={name} x={x} y={y} />)}
        <g stroke="#696969" strokeOpacity="0.55" strokeWidth="2" paintOrder="stroke">
          {labels.map(([kind, text, x, y, anchor = "middle", turn], i) => {
            const k = kinds[kind];
            return (
              <text key={i} x={x} y={y} textAnchor={anchor} fontSize={k.size} fontWeight={k.weight} fill={k.color} letterSpacing={k.spacing}
                stroke={turn ? "none" : undefined} transform={turn ? `rotate(${turn} ${x} ${y - 4})` : undefined}>
                {text}
              </text>
            );
          })}
        </g>
      </g>
      <Pin x={33} y={131} color="#203628"><path d="M0-7L4-2H2L5 2H1v3h-2V2h-4l3-4h-2z" fill="#6b756c" /></Pin>
      <Pin x={154} y={223} color="#3a3c3e">{museum}</Pin>
      <Pin x={883} y={229} color="#3a3c3e">{museum}</Pin>
      <Pin x={966} y={234} color="#3a3c3e">{museum}</Pin>
      <Pin x={916} y={322} color="#223a5a"><path d="M-6-5h2l1 2h8l-2 5h-5l-1 1h7v1h-8V3l1-2-2-5h-1zM-3 5h2v2h-2zM2 5h2v2H2z" fill="#777f88" /></Pin>
      <Pin x={1429} y={424} color="#3a3c3e"><path d="M-4-5h2v1h1v-1h2v1h1v-1h2v3l-1 1v3h1v2h-8V2h1v-3l-1-1z" fill="#777" /></Pin>
      <path d="M900 204h21q-1 4-5 8l-5 7-5-7q-5-4-6-8z" fill="#000" />
      <g fontFamily="Liberation Sans, Arial, sans-serif" fontSize="15" fill="#fff" fillOpacity="0.5">
        {[124, 380].map((y) => watermarkX.map((x) => <text key={`${x}-${y}`} x={x} y={y}>For development purposes only</text>))}
      </g>
      <text x="6" y="433" fontFamily="Lato, sans-serif" fontSize="20" fontWeight="700" stroke="#c8c8c8" strokeWidth="3" paintOrder="stroke" strokeLinejoin="round">
        <tspan fill="#4285f4">G</tspan><tspan fill="#ea4335">o</tspan><tspan fill="#fbbc05">o</tspan><tspan fill="#4285f4">g</tspan><tspan fill="#34a853">l</tspan><tspan fill="#ea4335">e</tspan>
      </text>
    </MapDrawing>
  );
}

function ControlIcon({ d }: { d: string }) {
  return <svg width="18" height="18" viewBox="0 0 18 18" fill="#666" aria-hidden="true"><path d={d} /></svg>;
}

export default function App() {
  return (
    <>
      <GlobalStyle />
      <TopBar />
      <Header>
        <HomeLink href="#home"><Logo /></HomeLink>
        <Nav>
          {["HOME", "THE CLUB", "LADIES", "VACANCIES", "CONTACT"].map((item) => <NavLink key={item} href="#">{item}</NavLink>)}
        </Nav>
      </Header>

      <MapPanel>
        <CityMap />
        <Dialog role="dialog" aria-label="Google Maps">
          <DialogBrand>Google</DialogBrand>
          <DialogTitle>This page can't load Google Maps correctly.</DialogTitle>
          <DialogRow>
            <OwnerLink href="#">Do you own this website?</OwnerLink>
            <OkButton type="button">OK</OkButton>
          </DialogRow>
        </Dialog>
        <MapControls>
          <ControlGroup>
            <ControlButton type="button" aria-label="Toggle fullscreen"><ControlIcon d="M0 0h6v2H2v4H0zM12 0h6v6h-2V2h-4zM0 12h2v4h4v2H0zM16 12h2v6h-6v-2h4z" /></ControlButton>
          </ControlGroup>
          <ControlGroup>
            <ControlButton type="button" aria-label="Zoom in"><ControlIcon d="M7 0h4v7h7v4h-7v7H7v-7H0V7h7z" /></ControlButton>
            <ControlDivider />
            <ControlButton type="button" aria-label="Zoom out"><ControlIcon d="M0 7h18v4H0z" /></ControlButton>
          </ControlGroup>
        </MapControls>
        <Attribution>
          <Credit as="span">Map data © 2020</Credit>
          <Credit href="#">Terms of Use</Credit>
          <Credit href="#">Report a map error</Credit>
        </Attribution>
      </MapPanel>

      <Main>
        <Container>
          <Title>For more information contact us!</Title>
          <Details>
            <p>Outside Wieringerstraat 3 &amp; 5, Amsterdam</p>
            <p>020-3627626</p>
            <p><TextLink href="#">luxury@clubluxury.nl</TextLink></p>
            <Profiles>
              <p><TextLink href="#">http://www.facebook.com</TextLink> / clubluxury</p>
              <p><TextLink href="#">http://twitter.com</TextLink> / clubluxury</p>
            </Profiles>
          </Details>
          <Form onSubmit={(e) => e.preventDefault()}>
            <Field>
              <label htmlFor="name">Name</label>
              <TextInput id="name" type="text" />
            </Field>
            <Field>
              <label htmlFor="email">E-mail:</label>
              <TextInput id="email" type="email" />
            </Field>
            <Field>
              <label htmlFor="message">Message:</label>
              <MessageBox id="message" />
            </Field>
            <SendButton type="submit">Send Message</SendButton>
          </Form>
        </Container>
      </Main>

      <Footer>
        <Container>
          <Columns>
            <Column>
              <Widget>
                <WidgetTitle>About us</WidgetTitle>
                <p>Club Luxury is an exclusive sex club located in a monumental building located on the Haarlemmerstraat right in the center of Amsterdam. And for more than 40 years the location for an unprecedented evening full of erotic pleasure.</p>
              </Widget>
              <Widget>
                <WidgetTitle>Search</WidgetTitle>
                <SearchForm role="search" onSubmit={(e) => e.preventDefault()}>
                  <SearchInput type="text" aria-label="Search" />
                  <SearchButton type="submit" aria-label="Search">
                    <svg width="20" height="20" viewBox="0 0 20 20" fill="none" stroke="#000">
                      <circle cx="8.7" cy="9" r="6.9" strokeWidth="2.6" />
                      <path d="M13.5 14L18.5 18.5" strokeWidth="3.6" />
                    </svg>
                  </SearchButton>
                </SearchForm>
              </Widget>
            </Column>
            <Column>
              <Widget>
                <WidgetTitle>Contact</WidgetTitle>
                <ContactList>
                  <ContactItem><ItemIcon><FaHome size={16} /></ItemIcon>Outside Wieringerstraat 3 &amp; 5, Amsterdam</ContactItem>
                  <ContactItem><ItemIcon><MdCall size={16} /></ItemIcon>WhatsApp: +31 614 80 52 68</ContactItem>
                  <ContactItem><ItemIcon><FaMobileAlt size={12} /></ItemIcon>020-3627626</ContactItem>
                  <ContactItem><ItemIcon><FaEnvelope size={16} /></ItemIcon><TextLink href="#">luxury@clubluxury.nl</TextLink></ContactItem>
                  <ContactItem><ItemIcon $turned><FaLink size={15} /></ItemIcon><TextLink href="#">http://www.clubluxury.nl/</TextLink></ContactItem>
                </ContactList>
              </Widget>
            </Column>
            <Column>
              <Widget>
                <WidgetTitle>Opening Hours</WidgetTitle>
                <p>Daily from 00:00 to 07:00</p>
              </Widget>
              <Widget>
                <WidgetTitle>We Are Social</WidgetTitle>
                <Socials>
                  <SocialLink href="#" aria-label="Facebook"><FaFacebookF size={20} /></SocialLink>
                  <SocialLink href="#" aria-label="Twitter"><FaTwitter size={20} /></SocialLink>
                </Socials>
              </Widget>
            </Column>
          </Columns>
          <Registration>Registered Chamber of Commerce no. 853830472</Registration>
        </Container>
      </Footer>
      <Legal>
        <Container>
          <p>All Rights Reserved © 2016 CLUBLUXURY.COM | | Web design by EPHREM | Powered by MERCKWAARDIG</p>
        </Container>
      </Legal>
    </>
  );
}
